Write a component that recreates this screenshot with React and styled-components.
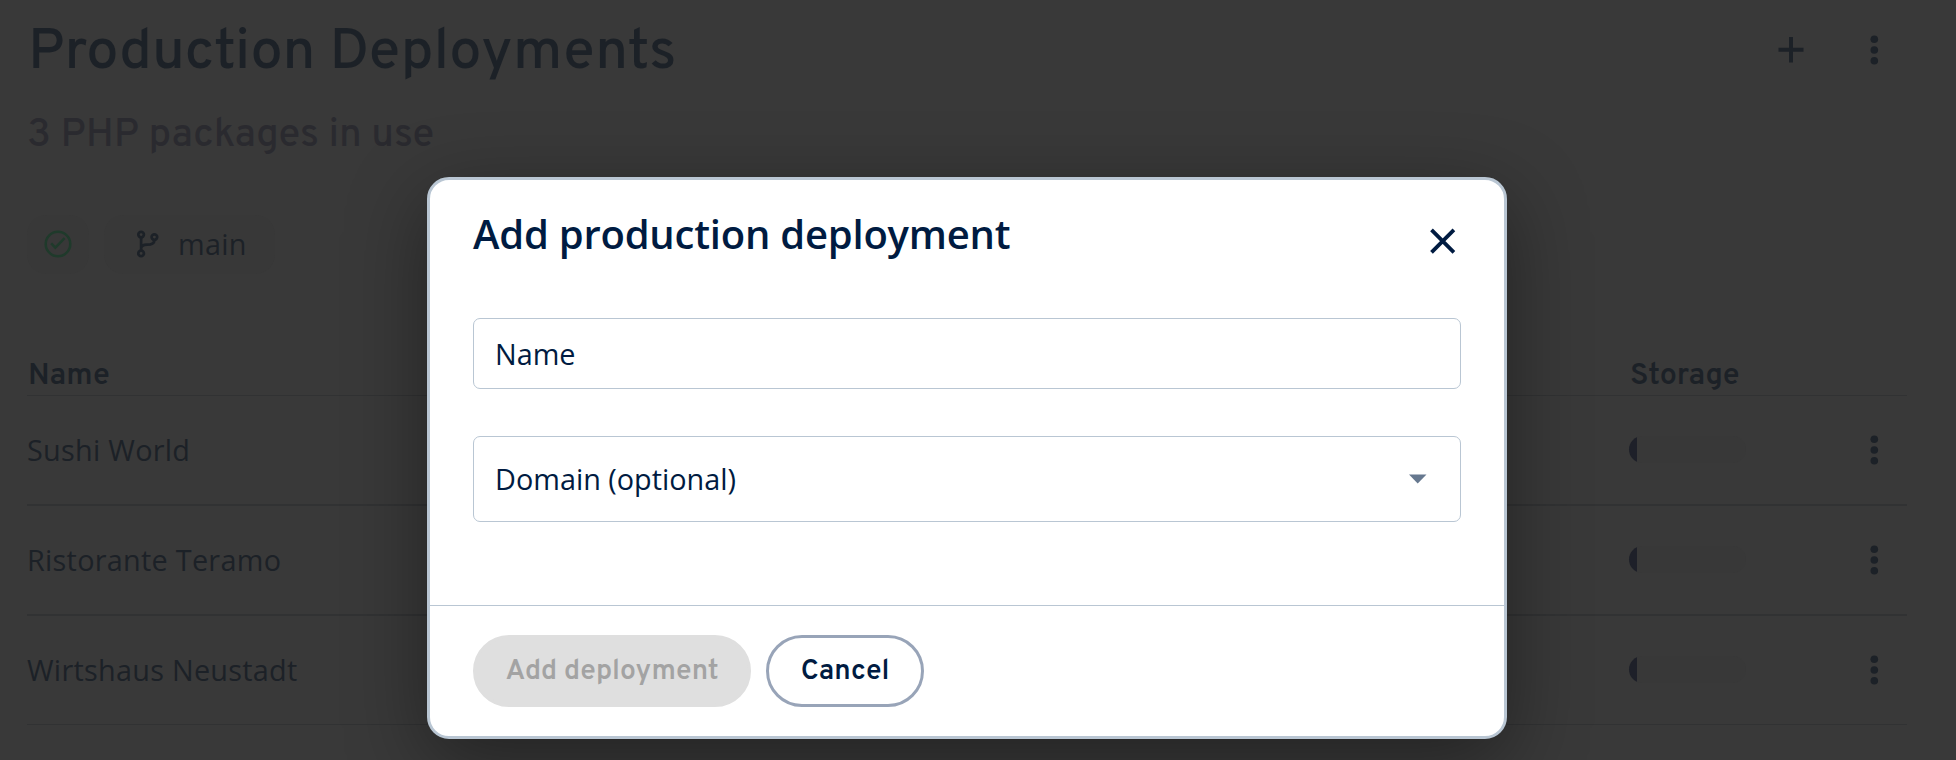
import React from "react";
import styled, { createGlobalStyle } from "styled-components";

const heading = `"Overpass", "Open Sans", sans-serif`;
const body = `"Open Sans", sans-serif`;

const GlobalStyle = createGlobalStyle`
  * { box-sizing: border-box; }
  body { margin: 0; background: #393939; font-family: ${body}; overflow: hidden; }
  h1, h2, p { margin: 0; }
  button { font: inherit; margin: 0; padding: 0; border: 0; background: none; color: inherit; }
`;

const Page = styled.main`
  position: relative;
  width: 1956px;
  height: 760px;
  overflow: hidden;
  padding: 0 49px 0 27px;
  color: #1c2127;
`;

const Header = styled.header`
  display: flex;
  justify-content: space-between;
  height: 100px;
  padding-right: 15px;
`;

const Title = styled.h1`
  padding-left: 1px;
  font: 500 57.6px/108px ${heading};
  letter-spacing: 0.12px;
  white-space: nowrap;
`;

const Actions = styled.div`
  display: flex;
  align-items: center;
  gap: 47px;
`;

const IconButton = styled.button`
  display: flex;
  align-items: center;
  justify-content: center;
  width: 36px;
  height: 36px;
`;

const Subtitle = styled.p`
  height: 64px;
  font: 500 39.8px/72px ${heading};
  color: #2a2a2f;
`;

const Chips = styled.div`
  display: flex;
  gap: 15px;
  margin-top: 51px;
`;

const Chip = styled.div`
  display: flex;
  align-items: center;
  justify-content: ${(p) => (p.$wide ? "flex-start" : "center")};
  gap: 19px;
  width: ${(p) => (p.$wide ? 171 : 62)}px;
  height: 59px;
  padding: 0 0 1px ${(p) => (p.$wide ? 32 : 0)}px;
  border-radius: 20px;
  background: #383838;
  font-size: 28.8px;
  letter-spacing: 0.3px;
`;

const ChipLabel = styled.span`
  padding-bottom: 2px;
`;

const Table = styled.section`
  margin-top: 71px;
`;

const HeadRow = styled.div`
  display: grid;
  grid-template-columns: 1602px 1fr;
  height: 51px;
  padding-left: 1px;
  border-bottom: 1px solid #313233;
  font: 600 30.4px/63px ${heading};
`;

const Row = styled.div`
  display: grid;
  grid-template-columns: 1602px 1fr 36px;
  align-items: center;
  height: ${(p) => (p.$last ? 109 : 110)}px;
  padding: 0 15px 1px 0;
  border-bottom: ${(p) => (p.$last ? 1 : 2)}px solid #313233;
  font-size: 28.8px;
  letter-spacing: 0.28px;
`;

const RowName = styled.span`
  padding-bottom: 1px;
`;

const Meter = styled.div`
  width: 117px;
  height: 27px;
  border-radius: 14px;
  overflow: hidden;
  background: #383838;
`;

const MeterFill = styled.div`
  width: 8px;
  height: 100%;
  background: #1e2029;
`;

const Dialog = styled.section`
  position: absolute;
  left: 427px;
  top: 177px;
  width: 1080px;
  height: 562px;
  border: 3px solid #b9c6d3;
  border-radius: 22px;
  background: #fff;
  color: #001b41;
  box-shadow: 0 22px 80px rgba(0, 0, 0, 0.4);
`;

const DialogHead = styled.div`
  display: flex;
  justify-content: space-between;
  height: 138px;
  padding: 24px 43px 0;
`;

const DialogTitle = styled.h2`
  font: 600 40px/60px ${body};
  letter-spacing: -0.22px;
`;

const CloseButton = styled(IconButton)`
  margin-top: 19px;
`;

const Fields = styled.div`
  display: flex;
  flex-direction: column;
  gap: 47px;
  height: 287px;
  padding: 0 43px;
`;

const Field = styled.div`
  display: flex;
  align-items: center;
  justify-content: space-between;
  height: ${(p) => p.$height}px;
  padding: 0 33px 1px 21px;
  border: 1px solid #b9c6d3;
  border-radius: 7px;
  font-size: 28.8px;
`;

const DialogFoot = styled.div`
  display: flex;
  gap: 15px;
  height: 131px;
  padding: 29px 43px;
  border-top: 1px solid #b9c6d3;
`;

const PillButton = styled.button`
  width: ${(p) => p.$width}px;
  height: 72px;
  padding-top: 2px;
  border: 3px solid ${(p) => (p.disabled ? "#dfdfdf" : "#98a4b8")};
  border-radius: 36px;
  background: ${(p) => (p.disabled ? "#dfdfdf" : "#fff")};
  color: ${(p) => (p.disabled ? "#a3a3a3" : "#001b41")};
  font: 600 28.2px/64px ${heading};
  white-space: nowrap;
`;

const Dots = () => (
  <svg width="36" height="36" viewBox="0 0 36 36" fill="currentColor">
    <circle cx="18.3" cy="7.2" r="3.8" />
    <circle cx="18.3" cy="18" r="3.8" />
    <circle cx="18.3" cy="28.8" r="3.8" />
  </svg>
);

const deployments = ["Sushi World", "Ristorante Teramo", "Wirtshaus Neustadt"];

export default function App() {
  return (
    <Page>
      <GlobalStyle />
      <Header>
        <Title>Production Deployments</Title>
        <Actions>
          <IconButton aria-label="Add">
            <svg width="36" height="36" stroke="currentColor" strokeWidth="4">
              <path d="M18 5v25.5M5.5 17.7h25" />
            </svg>
          </IconButton>
          <IconButton aria-label="More"><Dots /></IconButton>
        </Actions>
      </Header>
      <Subtitle>3 PHP packages in use</Subtitle>
      <Chips>
        <Chip>
          <svg width="28" height="28" fill="none" stroke="#1f3a2b" strokeWidth="2.5">
            <circle cx="14" cy="14" r="12.3" />
            <path d="M7.2 13.4l4.1 4.2 9.3-9.4" />
          </svg>
        </Chip>
        <Chip $wide>
          <svg width="23" height="28" fill="none" stroke="currentColor" strokeWidth="2.7">
            <circle cx="5.1" cy="4.6" r="2.8" />
            <circle cx="5.1" cy="23.4" r="2.8" />
            <circle cx="18.4" cy="7.1" r="2.8" />
            <path d="M5.1 7.4v13.2M5.1 18.6c0-3 3-4 6-4 4.5 0 7.3-1 7.3-4.7" />
          </svg>
          <ChipLabel>main</ChipLabel>
        </Chip>
      </Chips>
      <Table>
        <HeadRow><span>Name</span><span>Storage</span></HeadRow>
        {deployments.map((name, i) => (
          <Row key={name} $last={i === 2}>
            <RowName>{name}</RowName>
            <Meter><MeterFill /></Meter>
            <IconButton aria-label="More"><Dots /></IconButton>
          </Row>
        ))}
      </Table>
      <Dialog role="dialog">
        <DialogHead>
          <DialogTitle>Add production deployment</DialogTitle>
          <CloseButton aria-label="Close">
            <svg width="36" height="36" stroke="currentColor" strokeWidth="3.8">
              <path d="M6.5 6.9l22.4 22.4M28.9 6.9L6.5 29.3" />
            </svg>
          </CloseButton>
        </DialogHead>
        <Fields>
          <Field $height={71}>Name</Field>
          <Field $height={86}>
            Domain (optional)
            <svg width="18" height="10" fill="#66788f"><path d="M0 .5h17.5L8.7 9.5z" /></svg>
          </Field>
        </Fields>
        <DialogFoot>
          <PillButton disabled $width={278}>Add deployment</PillButton>
          <PillButton $width={158}>Cancel</PillButton>
        </DialogFoot>
      </Dialog>
    </Page>
  );
}
